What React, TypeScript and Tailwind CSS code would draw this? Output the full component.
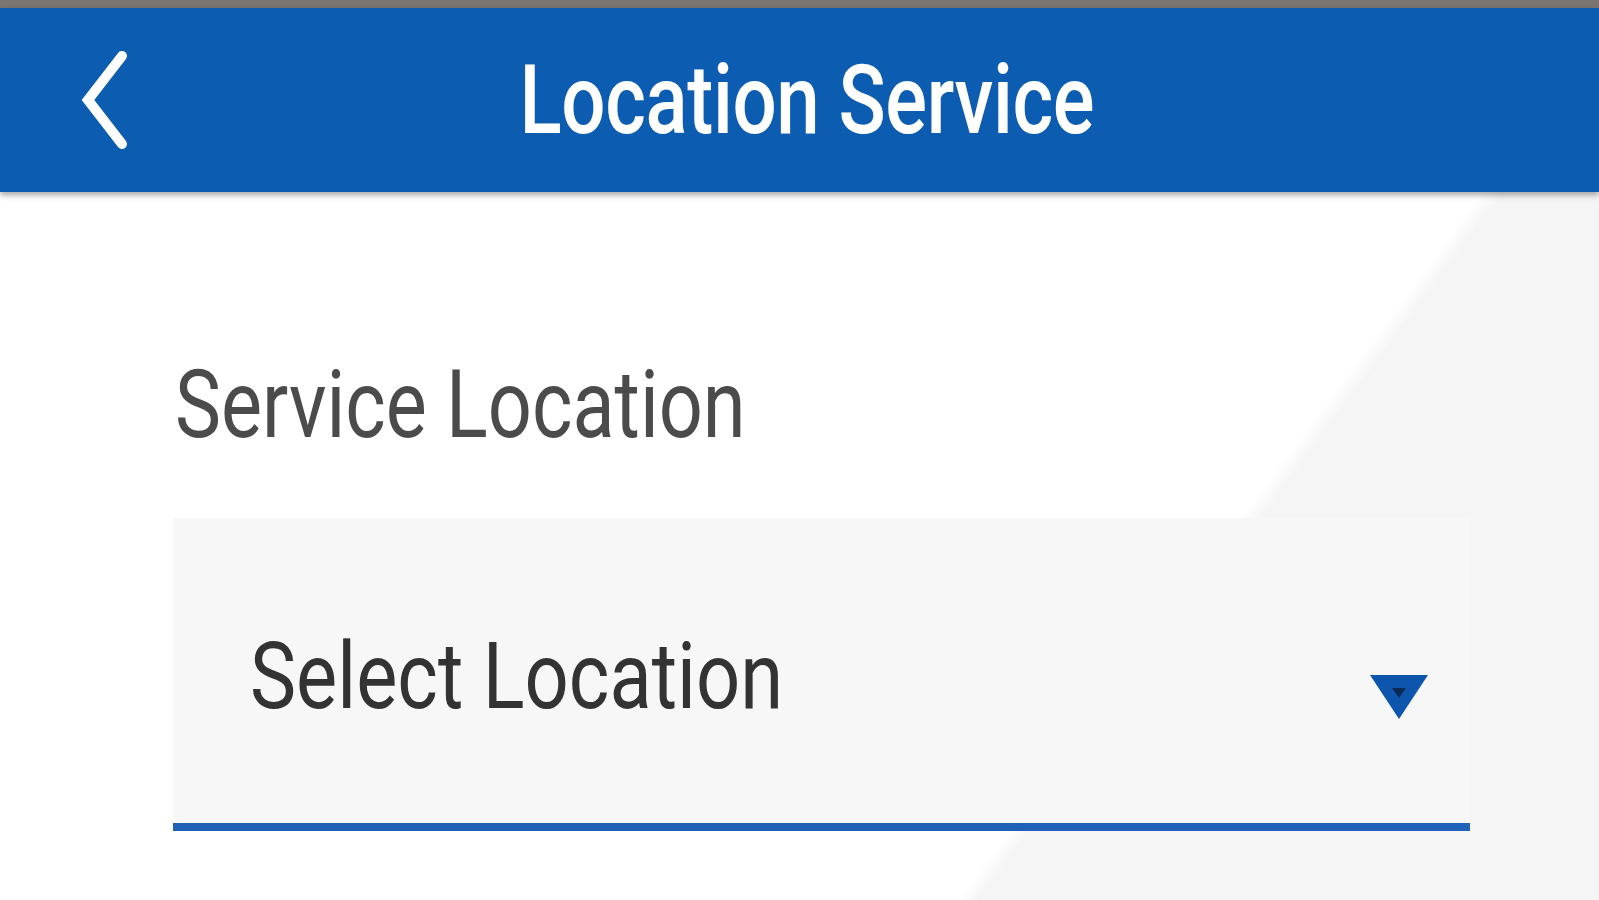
const font = { fontFamily: 'Roboto, "Noto Sans", sans-serif' };

function BackChevron() {
  return (
    <svg width="50" height="104" viewBox="0 0 50 104" className="shrink-0">
      <polyline
        points="42,8 8,52 42,96"
        fill="none"
        stroke="#ffffff"
        strokeWidth="10"
        strokeLinecap="round"
        strokeLinejoin="miter"
      />
    </svg>
  );
}

function DropTriangle() {
  return (
    <svg width="62" height="50" viewBox="0 0 62 50">
      <polygon points="2,3 60,3 31,47" fill="#0e55ad" />
      <polygon points="24,16 38,16 31,26" fill="#0a2a55" />
    </svg>
  );
}

export default function App() {
  return (
    <div className="flex h-[900px] w-full flex-col overflow-hidden bg-white" style={font}>
      <div className="h-[8px] bg-[#7b7672]" />

      <header className="relative z-10 flex h-[184px] items-center bg-[#0c5cb1] px-[80px] shadow-[0_3px_6px_rgba(0,0,0,0.35)]">
        <BackChevron />
        <h1 className="flex-1 pl-[14px] text-center text-[97px] font-medium leading-none text-white">
          <span className="inline-block scale-x-[0.805] tracking-[-0.5px]">Location Service</span>
        </h1>
        <div className="w-[50px] shrink-0" />
      </header>

      <main className="flex-1 bg-[linear-gradient(126.5deg,#ffffff_69.8%,#f5f5f5_70.8%)] pl-[173px] pt-[165px]">
        <label className="block pl-[2px] text-[95px] leading-none text-[#4b4b4b]">
          <span className="inline-block origin-left scale-x-[0.815]">Service Location</span>
        </label>

        <div className="mt-[66px] flex h-[313px] w-[1297px] items-center border-b-[8px] border-[#1f62b8] bg-[#f7f7f7] pl-[77px] pr-[40px]">
          <span className="flex-1 pt-[12px] text-[93px] leading-none text-[#333333]">
            <span className="inline-block origin-left scale-x-[0.835]">Select Location</span>
          </span>
          <div className="pt-[52px]">
            <DropTriangle />
          </div>
        </div>
      </main>
    </div>
  );
}
